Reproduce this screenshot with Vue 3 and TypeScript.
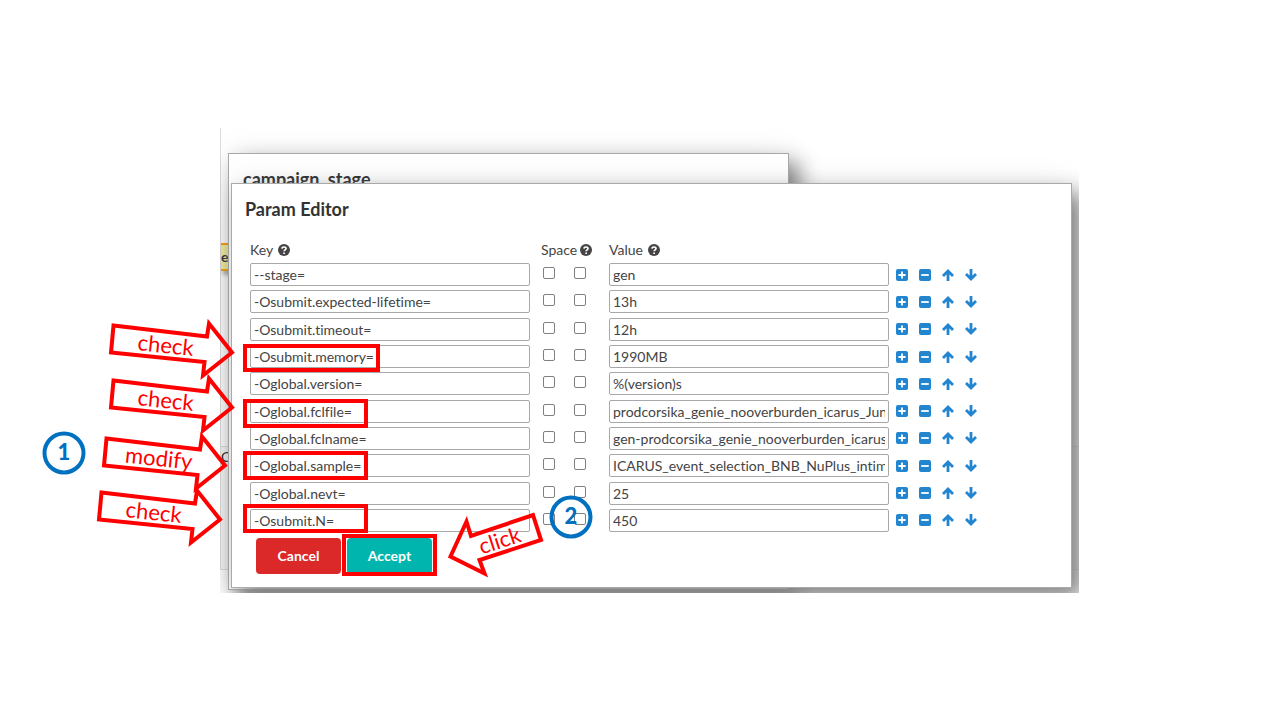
<script setup lang="ts">
import { ref } from 'vue'

interface Param {
  key: string
  value: string
  before: boolean
  after: boolean
}

const param = (key: string, value: string): Param => ({ key, value, before: false, after: false })

const params = ref<Param[]>([
  param('--stage=', 'gen'),
  param('-Osubmit.expected-lifetime=', '13h'),
  param('-Osubmit.timeout=', '12h'),
  param('-Osubmit.memory=', '1990MB'),
  param('-Oglobal.version=', '%(version)s'),
  param('-Oglobal.fclfile=', 'prodcorsika_genie_nooverburden_icarus_Jun'),
  param('-Oglobal.fclname=', 'gen-prodcorsika_genie_nooverburden_icarus'),
  param('-Oglobal.sample=', 'ICARUS_event_selection_BNB_NuPlus_intim'),
  param('-Oglobal.nevt=', '25'),
  param('-Osubmit.N=', '450'),
])

function add(i: number) {
  params.value.splice(i + 1, 0, param('', ''))
}
function remove(i: number) {
  params.value.splice(i, 1)
}
function move(i: number, step: number) {
  const j = i + step
  if (j < 0 || j >= params.value.length) return
  const [row] = params.value.splice(i, 1)
  params.value.splice(j, 0, row)
}

const arrows = [
  { x: 0, y: 0, text: 'check' },
  { x: 0, y: 55, text: 'check' },
  { x: -7, y: 113, text: 'modify' },
  { x: -12, y: 167, text: 'check' },
]

const frames = [
  { x: 245, y: 346, w: 133, h: 24 },
  { x: 245, y: 401, w: 121, h: 25 },
  { x: 245, y: 453, w: 121, h: 25 },
  { x: 245, y: 506, w: 121, h: 25 },
  { x: 344, y: 536, w: 91, h: 38 },
]

const steps = [
  { x: 64, y: 453, n: '1' },
  { x: 571, y: 517, n: '2' },
]
</script>

<template>
  <main class="slide">
    <section class="capture">
      <div class="backdrop">
        <div class="panel upper"><span class="tag">e</span></div>
        <div class="panel lower"><span>C</span></div>
      </div>

      <div class="window stage-window">
        <h2>campaign_stage</h2>
      </div>

      <form class="window editor" @submit.prevent>
        <h2>Param Editor</h2>
        <table>
          <thead>
            <tr>
              <th>
                Key
                <svg class="help" viewBox="0 0 12 12" aria-hidden="true"><circle cx="6" cy="6" r="6" /><path d="M4 4.6C4.1 2.5 8 2.4 8 4.6C8 5.8 6.2 5.9 6.1 7.2M6.1 8.5V10" /></svg>
              </th>
              <th class="space">
                Space
                <svg class="help" viewBox="0 0 12 12" aria-hidden="true"><circle cx="6" cy="6" r="6" /><path d="M4 4.6C4.1 2.5 8 2.4 8 4.6C8 5.8 6.2 5.9 6.1 7.2M6.1 8.5V10" /></svg>
              </th>
              <th>
                Value
                <svg class="help" viewBox="0 0 12 12" aria-hidden="true"><circle cx="6" cy="6" r="6" /><path d="M4 4.6C4.1 2.5 8 2.4 8 4.6C8 5.8 6.2 5.9 6.1 7.2M6.1 8.5V10" /></svg>
              </th>
            </tr>
          </thead>
          <tbody>
            <tr v-for="(p, i) in params" :key="i">
              <td><input v-model="p.key" class="field" type="text" aria-label="Key" /></td>
              <td class="checks">
                <input v-model="p.before" type="checkbox" aria-label="Space after key" />
                <input v-model="p.after" type="checkbox" aria-label="Space after value" />
              </td>
              <td><input v-model="p.value" class="field" type="text" aria-label="Value" /></td>
              <td class="tools">
                <button type="button" aria-label="Add row" @click="add(i)">
                  <svg viewBox="0 0 12 12"><rect width="12" height="12" rx="2" /><path class="cut" d="M6 2.4V9.6M2.4 6H9.6" /></svg>
                </button>
                <button type="button" aria-label="Remove row" @click="remove(i)">
                  <svg viewBox="0 0 12 12"><rect width="12" height="12" rx="2" /><path class="cut" d="M2.2 6H9.8" /></svg>
                </button>
                <button type="button" aria-label="Move up" @click="move(i, -1)">
                  <svg viewBox="0 0 12 12"><path class="line" d="M6 12V2M1 7L6 2L11 7" /></svg>
                </button>
                <button type="button" aria-label="Move down" @click="move(i, 1)">
                  <svg viewBox="0 0 12 12"><path class="line" d="M6 0V10M1 5L6 10L11 5" /></svg>
                </button>
              </td>
            </tr>
          </tbody>
        </table>
        <div class="actions">
          <button type="button" class="cancel">Cancel</button>
          <button type="submit" class="accept">Accept</button>
        </div>
      </form>
    </section>

    <svg class="notes" width="620" height="600" viewBox="0 0 620 600">
      <g class="red">
        <rect v-for="(f, i) in frames" :key="i" :x="f.x" :y="f.y" :width="f.w" :height="f.h" />
        <g v-for="(a, i) in arrows" :key="i" :transform="`translate(${a.x} ${a.y})`">
          <path d="M113.500 325.500L207 336.500L209 323.500L232 352.500L203 375.500L204.500 362L111 352.500Z" />
          <text transform="translate(165 353) rotate(6)">{{ a.text }}</text>
        </g>
        <path d="M450.500 556.500L466.500 521.500L471 536L533 515L541 540L479.500 560L484.500 573.500Z" />
        <text transform="translate(502 548) rotate(-18)">click</text>
      </g>
      <g v-for="s in steps" :key="s.n" class="step">
        <circle :cx="s.x" :cy="s.y" r="19.500" />
        <text :x="s.x" :y="s.y + 7">{{ s.n }}</text>
      </g>
    </svg>
  </main>
</template>

<style>
body {
  margin: 0;
  background: #fff;
}
</style>

<style scoped>
.slide {
  position: relative;
  box-sizing: border-box;
  min-height: 100vh;
  padding: 128px 201px 0 220px;
  font-family: Lato, "Open Sans", sans-serif;
  font-size: 14px;
  line-height: 20px;
  font-variant-ligatures: none;
  color: #444;
}
.capture {
  position: relative;
  overflow: hidden;
  padding: 55px 7px 5px 11px;
}
.backdrop {
  position: absolute;
  inset: 0 0 23px;
  display: flex;
  flex-direction: column;
  border: solid #ddd;
  border-width: 0 0 1px 1px;
}
.upper {
  height: 319px;
  box-sizing: border-box;
  padding-top: 115px;
  border-bottom: 1px solid #ddd;
}
.lower {
  flex: 1;
  background: #f8f8f8;
  color: #222;
}
.tag {
  display: block;
  width: 20px;
  height: 24px;
  line-height: 24px;
  border: solid #f90;
  border-width: 2px 0;
  background: #f3ef9a;
  color: #333;
  font-size: 14px;
  font-weight: 700;
  box-shadow: 2px 4px 4px #aaa;
}
.window {
  background: #fff;
  border: 1px solid #a9a9a9;
  box-shadow: 0 0 30px rgba(0, 0, 0, 0.08), 10px 10px 20px #888;
}
.window h2 {
  margin: 0;
  font-size: 18px;
  line-height: 24px;
  font-weight: 700;
  color: #333;
}
.stage-window {
  position: absolute;
  left: 8px;
  top: 25px;
  bottom: 3px;
  box-sizing: border-box;
  width: 561px;
  padding: 13px 14px;
}
.editor {
  position: relative;
  padding: 13px;
}
table {
  display: block;
  margin: 18px 5px 0;
}
tr {
  display: grid;
  grid-template-columns: 280px 79px 280px 1fr;
  align-items: center;
}
thead {
  display: block;
}
tbody {
  display: grid;
  grid-auto-rows: 1fr;
  min-height: 273px;
}
th {
  display: flex;
  align-items: center;
  gap: 5px;
  height: 22px;
  padding: 0;
  font-weight: 400;
}
.space {
  padding-left: 11px;
  gap: 3px;
}
td {
  padding: 0;
  display: flex;
}
.help {
  width: 12px;
  height: 12px;
  fill: #444;
}
.help path {
  fill: none;
  stroke: #fff;
  stroke-width: 1.7;
}
.field {
  box-sizing: border-box;
  width: 100%;
  height: 23px;
  margin: 0;
  padding: 0 3px;
  border: 1px solid #a8a8a8;
  border-radius: 2px;
  background: #fff;
  font: inherit;
  font-variant-ligatures: none;
  color: inherit;
}
.checks {
  gap: 19px;
  padding: 0 0 3px 13px;
}
.checks input {
  appearance: none;
  box-sizing: border-box;
  width: 12px;
  height: 12px;
  margin: 0;
  border: 1px solid #808080;
  border-radius: 2px;
  background: #fff;
}
.checks input:checked {
  background: #2185d0;
}
.tools {
  gap: 11px;
  padding-left: 7px;
}
.tools button {
  width: 12px;
  height: 12px;
  padding: 0;
  border: 0;
  background: none;
  cursor: pointer;
}
.tools svg {
  display: block;
  width: 12px;
  height: 12px;
  fill: #2185d0;
}
.tools .cut {
  stroke: #fff;
  stroke-width: 1.8;
}
.tools .line {
  fill: none;
  stroke: #2185d0;
  stroke-width: 2.8;
}
.actions {
  display: flex;
  gap: 6px;
  margin: 4px 0 0 11px;
}
.actions button {
  height: 36px;
  padding: 0;
  width: 85px;
  border: 0;
  border-radius: 4px;
  font: inherit;
  font-weight: 700;
  color: #fff;
  cursor: pointer;
}
.cancel {
  background: #db2828;
}
.accept {
  background: #00b5ad;
}
.notes {
  position: absolute;
  left: 0;
  top: 0;
  pointer-events: none;
  font-size: 22px;
  text-anchor: middle;
}
.red {
  fill: none;
  stroke: #f00;
  stroke-width: 4;
}
.red text {
  fill: #f00;
  stroke: none;
}
.step {
  fill: none;
  stroke: #0070c0;
  stroke-width: 4;
}
.step text {
  fill: #0070c0;
  stroke: none;
  font-weight: 900;
}
</style>
